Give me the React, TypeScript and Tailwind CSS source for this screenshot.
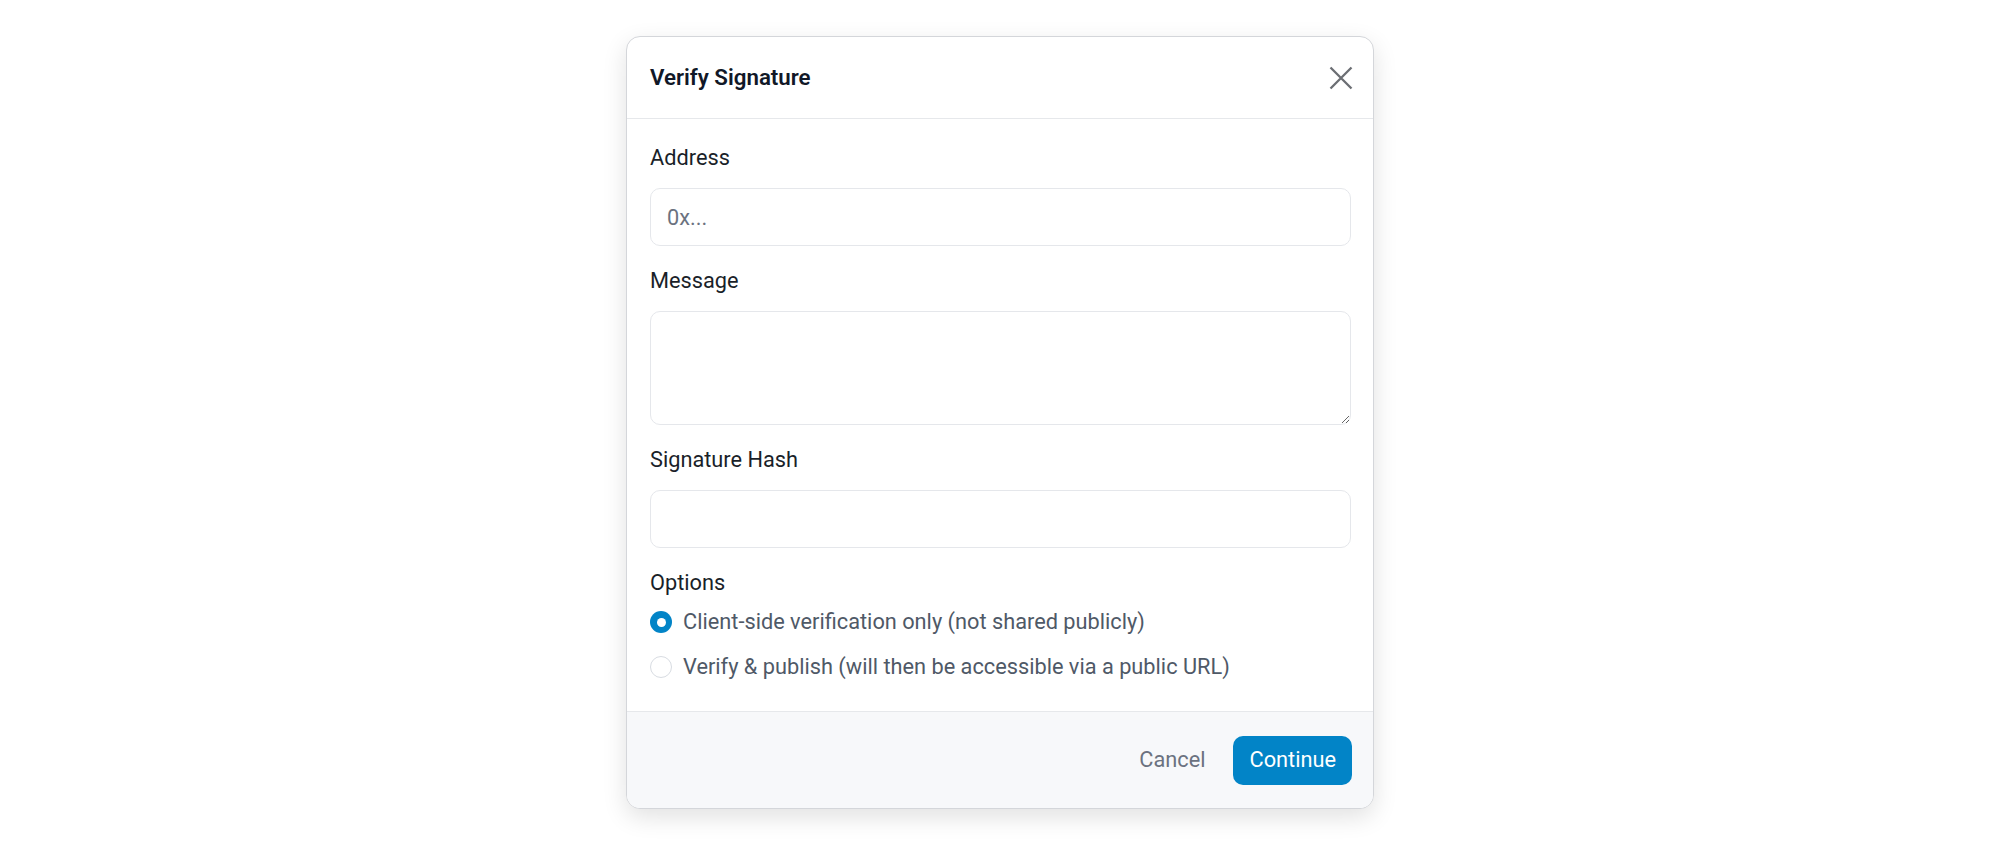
import React from "react";

function Radio({ checked, label }: { checked: boolean; label: string }) {
  return (
    <label className="flex h-[30px] items-center gap-[11px] cursor-pointer">
      {checked ? (
        <span className="flex h-[22px] w-[22px] items-center justify-center rounded-full bg-[#0284c7]">
          <span className="h-[9px] w-[9px] rounded-full bg-white" />
        </span>
      ) : (
        <span className="h-[22px] w-[22px] rounded-full border border-[#d8dce2] bg-white" />
      )}
      <span className="text-[21.75px] leading-[30px] text-[#4f5967]">{label}</span>
    </label>
  );
}

export default function App() {
  const [option, setOption] = React.useState(0);

  return (
    <div className="flex min-h-screen items-center justify-center bg-white font-[Roboto,sans-serif]">
      <div className="w-[748px] overflow-hidden rounded-[14px] border border-[#d4d6da] bg-white shadow-[0_8px_24px_rgba(0,0,0,0.12)]">
        {/* Header */}
        <div className="flex h-[82px] items-center justify-between border-b border-[#e6e8eb] pl-[23px] pr-[20px]">
          <h2 className="text-[22.3px] font-semibold text-[#111827]">Verify Signature</h2>
          <button className="text-[#6b6e73]">
            <svg width="24" height="24" viewBox="0 0 24 24" fill="none" stroke="currentColor" strokeWidth="2.3">
              <path d="M1.5 1.5 22.5 22.5M22.5 1.5 1.5 22.5" />
            </svg>
          </button>
        </div>

        {/* Body */}
        <div className="flex flex-col gap-5 pl-[23px] pr-[22px] pt-[24px] pb-[29px]">
          <div className="flex flex-col gap-[15px]">
            <label className="text-[21.75px] leading-[30px] text-[#1a1f29]">Address</label>
            <input
              placeholder="0x..."
              className="h-[58px] w-full rounded-[10px] border border-[#e5e7eb] px-4 text-[21.75px] text-[#1a1f29] outline-none placeholder:text-[#6b7280]"
            />
          </div>
          <div className="flex flex-col gap-[15px]">
            <label className="text-[21.75px] leading-[30px] text-[#1a1f29]">Message</label>
            <textarea className="h-[114px] w-full rounded-[10px] border border-[#e5e7eb] px-4 py-3 text-[21.75px] outline-none" />
          </div>
          <div className="flex flex-col gap-[15px]">
            <label className="text-[21.75px] leading-[30px] text-[#1a1f29]">Signature Hash</label>
            <input className="h-[58px] w-full rounded-[10px] border border-[#e5e7eb] px-4 text-[21.75px] outline-none" />
          </div>
          <div className="flex flex-col">
            <span className="text-[21.75px] leading-[30px] text-[#1a1f29]">Options</span>
            <div className="mt-[9px] flex flex-col gap-[15px]">
              <div onClick={() => setOption(0)}>
                <Radio checked={option === 0} label="Client-side verification only (not shared publicly)" />
              </div>
              <div onClick={() => setOption(1)}>
                <Radio checked={option === 1} label="Verify & publish (will then be accessible via a public URL)" />
              </div>
            </div>
          </div>
        </div>

        {/* Footer */}
        <div className="flex h-[97px] items-center justify-end gap-4 border-t border-[#e6e8eb] bg-[#f7f8fa] pr-[21px]">
          <button className="px-3 text-[21.75px] text-[#6b7280]">Cancel</button>
          <button className="h-[49px] rounded-[10px] bg-[#0284c7] px-4 text-[21.75px] text-white">
            Continue
          </button>
        </div>
      </div>
    </div>
  );
}
